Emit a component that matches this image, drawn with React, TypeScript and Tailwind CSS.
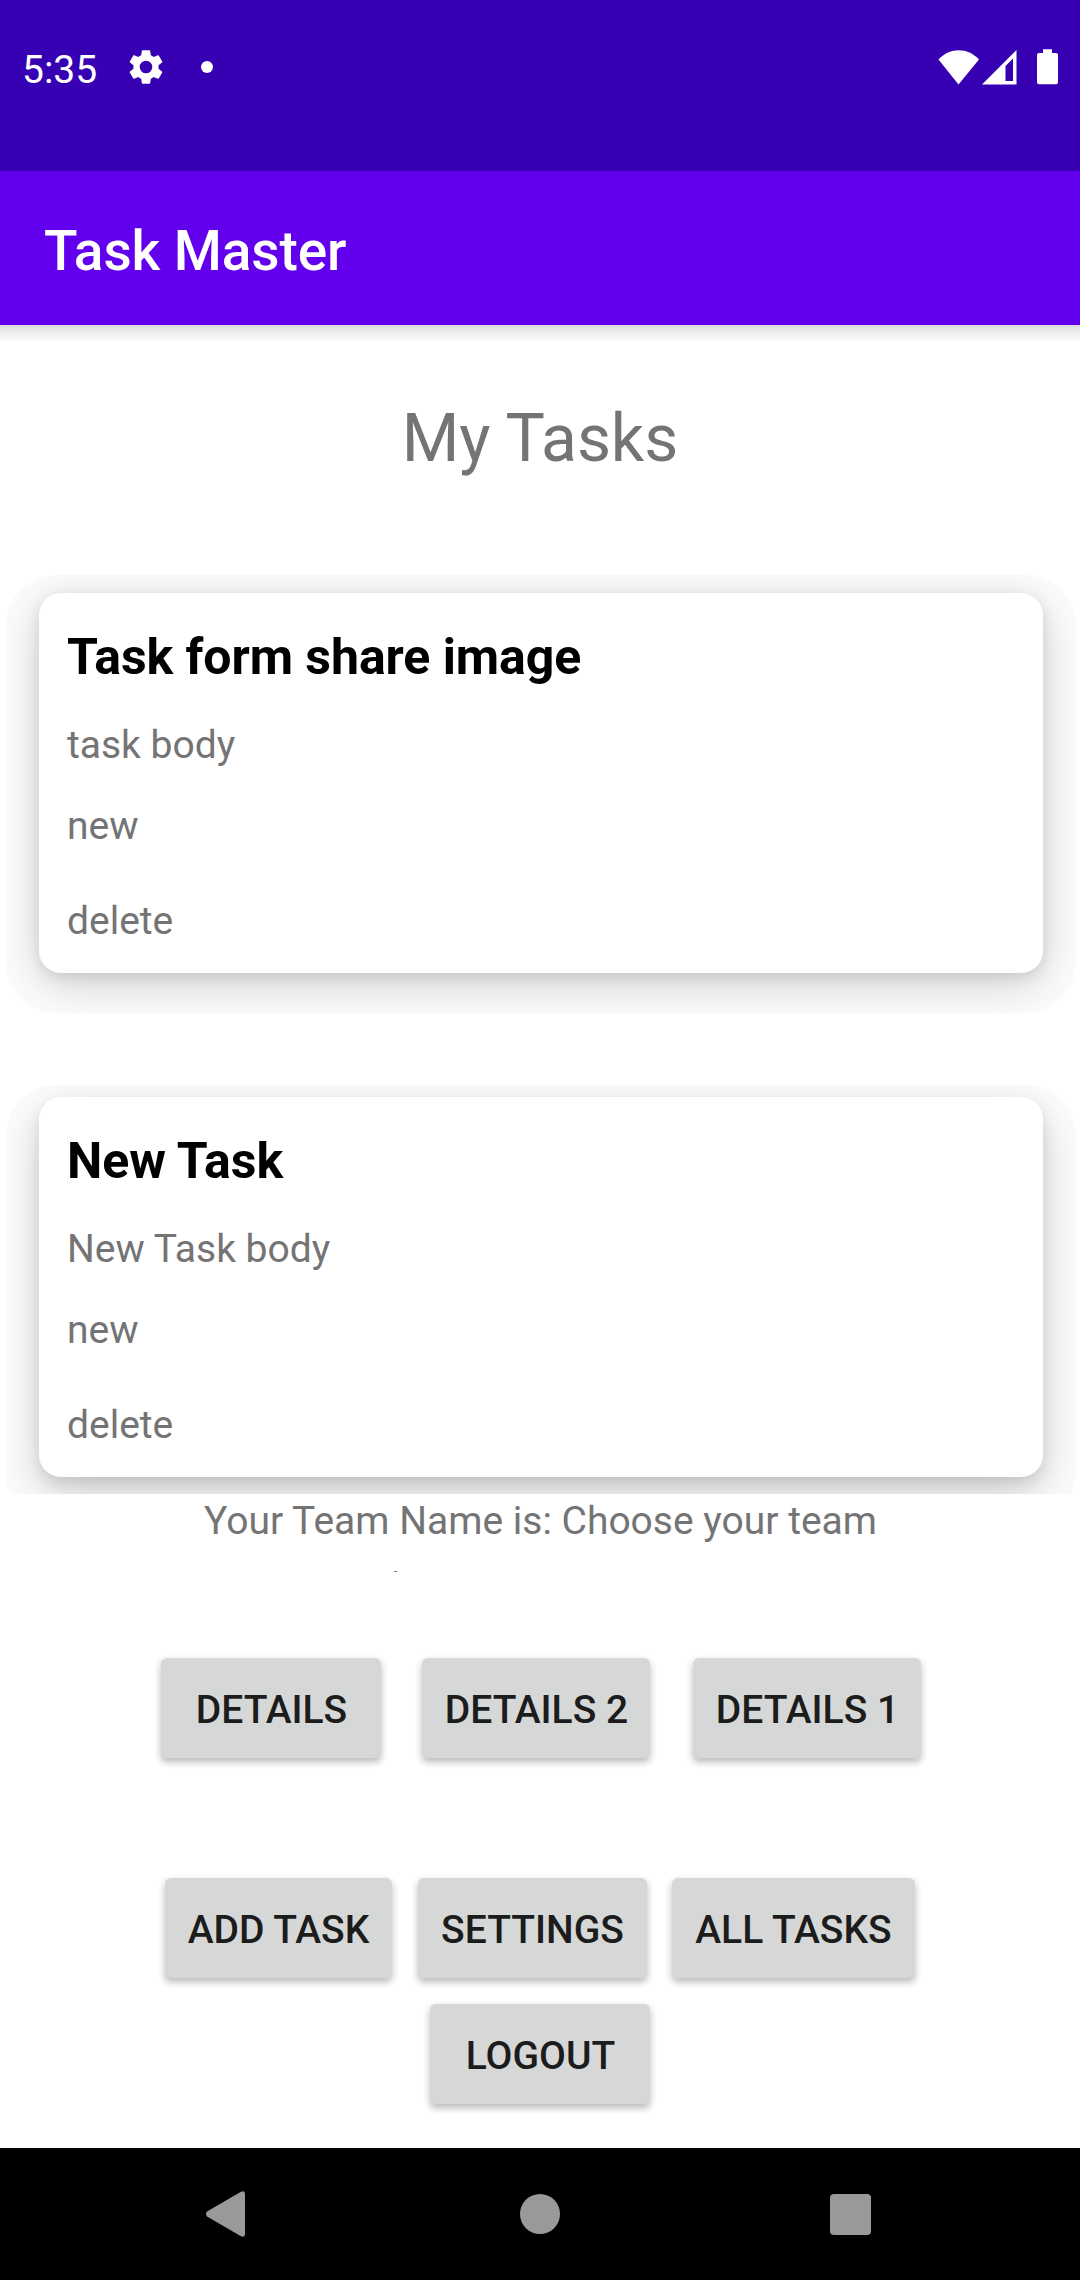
import React from "react";

const buttonShadow =
  "shadow-[0_4px_6px_rgba(0,0,0,0.24),0_3px_2px_6px_rgba(0,0,0,0.02)]";

function StatusBar() {
  return (
    <header className="flex h-[171px] shrink-0 items-start justify-between bg-[#3700b3] text-white">
      <div className="flex items-center pt-[46px] pl-[22px]">
        <span className="h-[48px] w-[107px] text-[39px] leading-[48px]">5:35</span>
        <svg className="-mt-[6px] -ml-[4px] h-[42px] w-[42px]" viewBox="0 0 24 24" fill="currentColor">
          <path d="M19.14 12.94c.04-.3.06-.61.06-.94 0-.32-.02-.64-.07-.94l2.03-1.58a.49.49 0 0 0 .12-.61l-1.92-3.32a.488.488 0 0 0-.59-.22l-2.39.96c-.5-.38-1.03-.7-1.62-.94l-.36-2.54a.484.484 0 0 0-.48-.41h-3.84c-.24 0-.43.17-.47.41l-.36 2.54c-.59.24-1.13.57-1.62.94l-2.39-.96c-.22-.08-.47 0-.59.22L2.74 8.87c-.12.21-.08.47.12.61l2.03 1.58c-.05.3-.09.63-.09.94s.02.64.07.94l-2.03 1.58a.49.49 0 0 0-.12.61l1.92 3.32c.12.22.37.29.59.22l2.39-.96c.5.38 1.03.7 1.62.94l.36 2.54c.05.24.24.41.48.41h3.84c.24 0 .44-.17.47-.41l.36-2.54c.59-.24 1.13-.56 1.62-.94l2.39.96c.22.08.47 0 .59-.22l1.92-3.32c.12-.22.07-.47-.12-.61l-2.01-1.58zM12 15.6A3.6 3.6 0 1 1 12 8.4a3.6 3.6 0 0 1 0 7.2z" />
        </svg>
        <span className="-mt-[6px] ml-[34px] h-3 w-3 rounded-full bg-white" />
      </div>
      <div className="flex items-end pt-[49px] pr-[22px]">
        <svg className="h-[36px] w-[42px]" viewBox="0 0 42 36" fill="currentColor">
          <path d="M0.500 10.500C12 -1.800 29.500 -1.800 41 10.500L20.500 35.500Z" />
        </svg>
        <svg className="ml-[2px] h-[36px] w-[35px]" viewBox="0 0 35 36" fill="currentColor" fillRule="evenodd">
          <path d="M0 35.500L34.500 1V35.500ZM23.500 17V32H31V9.500Z" />
        </svg>
        <svg className="ml-[20px] h-[36px] w-[21px]" viewBox="0 0 21 36" fill="currentColor">
          <path d="M6 0.300H15V4H19a2 2 0 0 1 2 2V33.300a2 2 0 0 1-2 2H2a2 2 0 0 1-2-2V6a2 2 0 0 1 2-2H6Z" />
        </svg>
      </div>
    </header>
  );
}

type Task = { title: string; body: string; state: string };

function TaskContent({ task }: { task: Task }) {
  return (
    <div className="flex flex-col pl-[28px] text-[39px] text-[#747474]">
      <h2 className="mt-[34px] h-[60px] text-[50px] leading-[60px] font-bold tracking-[-0.07px] text-black">
        {task.title}
      </h2>
      <p className="mt-[34px] h-[48px] leading-[48px]">{task.body}</p>
      <p className="mt-[33px] h-[48px] leading-[48px]">{task.state}</p>
      <p className="mt-[47px] h-[48px] leading-[48px]">delete</p>
    </div>
  );
}

function TextButton({ label, width }: { label: string; width: string }) {
  return (
    <button
      className={`h-[100px] rounded-[6px] bg-[#d6d8d7] pt-[4px] text-center text-[39px] leading-[96px] font-medium whitespace-nowrap text-[#1c1c1c] ${width} ${buttonShadow}`}
    >
      {label}
    </button>
  );
}

export default function App() {
  return (
    <div className="flex h-[2280px] w-[1080px] flex-col overflow-hidden bg-white font-['Roboto',sans-serif]">
      <StatusBar />
      <div className="relative flex h-[154px] shrink-0 items-center bg-[#6200ee] pl-[44px]">
        <h1 className="mt-[5px] text-[55px] leading-[64px] font-medium tracking-[-0.1px] text-white">Task Master</h1>
        <div className="absolute top-full left-0 h-[15px] w-full bg-linear-to-b from-[#dcdcdc] via-[#eeeeee] to-[#f9f9f9]" />
      </div>

      <main className="flex h-[1823px] flex-col">
        <h2 className="mt-[74px] h-[80px] text-center text-[66px] leading-[80px] tracking-[-0.1px] text-[#747474]">
          My Tasks
        </h2>

        <section className="mt-[96px] flex h-[919px] flex-col overflow-hidden">
          <div className="ml-[6px] h-[438px] w-[1070px] shrink-0 overflow-hidden rounded-[50px] bg-[#fcfcfc] pt-[18px] pl-[33px]">
            <div className="h-[380px] w-[1004px] rounded-[22px] bg-white shadow-[0_11px_46px_rgba(0,0,0,0.18),0_4px_14px_rgba(0,0,0,0.1)]">
              <TaskContent task={{ title: "Task form share image", body: "task body", state: "new" }} />
            </div>
          </div>
          <div className="mt-[72px] ml-[6px] h-[440px] w-[1070px] shrink-0 overflow-hidden rounded-[50px] bg-[#fcfcfc] pt-[12px] pl-[33px]">
            <div className="h-[380px] w-[1004px] rounded-[22px] bg-white shadow-[0_17px_46px_rgba(0,0,0,0.18),0_6px_14px_rgba(0,0,0,0.1)]">
              <TaskContent task={{ title: "New Task", body: "New Task body", state: "new" }} />
            </div>
          </div>
        </section>

        <p className="mt-[3px] h-[48px] pl-px text-center text-[39px] leading-[48px] text-[#747474]">
          Your Team Name is: Choose your team
        </p>
        <span className="mt-[26px] ml-[394px] h-px w-[3px] bg-[#777]" />

        <div className="mt-[86px] flex pl-[161px]">
          <TextButton label="DETAILS" width="w-[220px] pl-px" />
          <div className="ml-[41px]">
            <TextButton label="DETAILS 2" width="w-[228px] pl-px" />
          </div>
          <div className="ml-[43px]">
            <TextButton label="DETAILS 1" width="w-[228px] pl-px" />
          </div>
        </div>
        <div className="mt-[120px] flex pl-[165px]">
          <TextButton label="ADD TASK" width="w-[227px]" />
          <div className="ml-[26px]">
            <TextButton label="SETTINGS" width="w-[229px]" />
          </div>
          <div className="ml-[25px]">
            <TextButton label="ALL TASKS" width="w-[243px]" />
          </div>
        </div>
        <div className="mt-[26px] flex justify-center">
          <TextButton label="LOGOUT" width="w-[220px] pl-px" />
        </div>
      </main>

      <nav className="flex h-[132px] shrink-0 items-center bg-black pl-[206px] text-[#999]">
        <svg className="h-[46px] w-[39px]" viewBox="0 0 39 46" fill="currentColor">
          <path d="M1 20.500L34.500 1Q39 -1 39 3V43Q39 47 34.500 45L1 25.500Q-1 23 1 20.500Z" />
        </svg>
        <span className="ml-[275px] h-10 w-10 rounded-full bg-[#999]" />
        <span className="ml-[270px] h-[41px] w-[41px] rounded-[4px] bg-[#999]" />
      </nav>
    </div>
  );
}
